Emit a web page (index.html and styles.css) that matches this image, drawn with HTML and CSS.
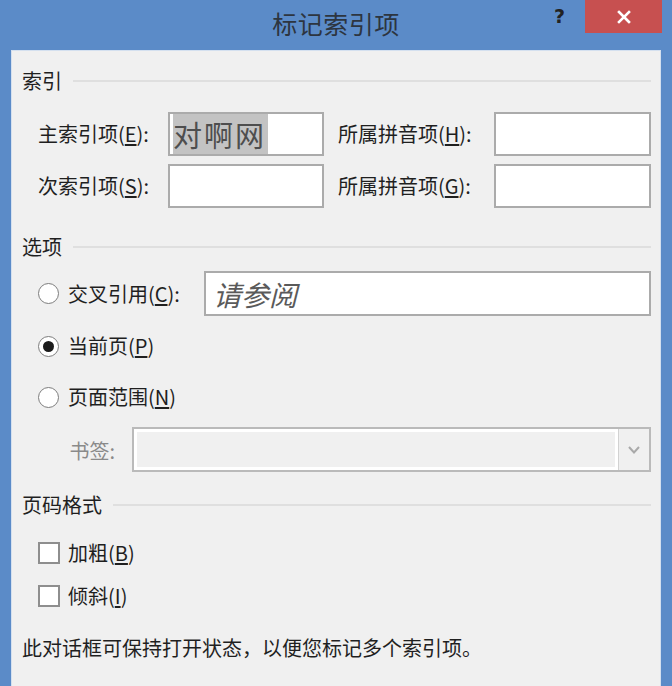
FILE: index.html
```html
<!DOCTYPE html>
<html lang="zh-CN">
<head>
<meta charset="utf-8">
<title>标记索引项</title>
<link rel="stylesheet" href="styles.css">
</head>
<body>
<div class="window">
  <div class="titlebar">
    <div class="tb-spacer"></div>
    <div class="tb-title">标记索引项</div>
    <div class="tb-controls">
      <span class="tb-help">?</span>
      <span class="tb-close">
        <svg width="14" height="14" viewBox="0 0 14 14"><path d="M2 2 L12 12 M12 2 L2 12" stroke="#fff" stroke-width="2.6" stroke-linecap="square"/></svg>
      </span>
    </div>
  </div>
  <div class="panel">
    <div class="section-head"><span>索引</span><span class="rule"></span></div>

    <div class="entry-grid">
      <label class="lbl">主索引项(<u>E</u>):</label>
      <div class="field"><span class="sel">对啊网</span></div>
      <label class="lbl lbl2">所属拼音项(<u>H</u>):</label>
      <div class="field"></div>
      <label class="lbl">次索引项(<u>S</u>):</label>
      <div class="field"></div>
      <label class="lbl lbl2">所属拼音项(<u>G</u>):</label>
      <div class="field"></div>
    </div>

    <div class="section-head head2"><span>选项</span><span class="rule"></span></div>

    <div class="opt-row xref">
      <span class="radio"></span>
      <span class="opt-label xref-label">交叉引用(<u>C</u>):</span>
      <div class="field wide"><span class="hint">请参阅</span></div>
    </div>
    <div class="opt-row current">
      <span class="radio checked"></span>
      <span class="opt-label">当前页(<u>P</u>)</span>
    </div>
    <div class="opt-row range">
      <span class="radio"></span>
      <span class="opt-label">页面范围(<u>N</u>)</span>
    </div>
    <div class="bookmark-row">
      <span class="bm-label">书签:</span>
      <div class="combo">
        <div class="combo-field"></div>
        <div class="combo-btn">
          <svg width="12" height="8" viewBox="0 0 12 8"><polyline points="1,1 6,6.5 11,1" fill="none" stroke="#a9a9a9" stroke-width="2"/></svg>
        </div>
      </div>
    </div>

    <div class="section-head head3"><span>页码格式</span><span class="rule"></span></div>

    <div class="opt-row bold">
      <span class="check"></span>
      <span class="opt-label">加粗(<u>B</u>)</span>
    </div>
    <div class="opt-row italic">
      <span class="check"></span>
      <span class="opt-label">倾斜(<u>I</u>)</span>
    </div>

    <p class="note">此对话框可保持打开状态，以便您标记多个索引项。</p>
  </div>
</div>
</body>
</html>
```

FILE: styles.css
```css
* { box-sizing: border-box; }
html, body {
  margin: 0;
  padding: 0;
}
body {
  width: 672px;
  height: 686px;
  overflow: hidden;
  background: #5b8bc8;
  font-family: "Noto Sans CJK SC", "Microsoft YaHei", sans-serif;
  color: #1f1f1f;
  font-size: 20px;
}
.window {
  width: 672px;
  height: 686px;
  display: flex;
  flex-direction: column;
}
.titlebar {
  height: 50px;
  display: grid;
  grid-template-columns: 1fr auto 1fr;
  align-items: start;
}
.tb-title {
  font-size: 25px;
  line-height: 46px;
  color: #2d3540;
  letter-spacing: 0.5px;
}
.tb-controls {
  display: flex;
  justify-content: flex-end;
  align-items: flex-start;
  padding-right: 10px;
}
.tb-help {
  font-family: "DejaVu Sans", sans-serif;
  font-weight: bold;
  font-size: 19px;
  line-height: 32px;
  color: #222;
  margin-right: 20px;
}
.tb-close {
  width: 77px;
  height: 33px;
  background: #c75050;
  display: flex;
  align-items: center;
  justify-content: center;
}
.panel {
  margin-left: 11px;
  width: 650px;
  flex: 1;
  background: #f0f0f0;
  border: 1px solid #d4e0ef;
  border-bottom: none;
  padding: 19px 9px 0 10px;
}
.section-head {
  display: flex;
  align-items: center;
  height: 22px;
  line-height: 22px;
}
.section-head .rule {
  flex: 1;
  height: 2px;
  background: #dfdfdf;
  margin-left: 11px;
}
.head2 { margin-top: 28px; }
.head3 { margin-top: 22px; }

.entry-grid {
  margin-top: 20px;
  padding-left: 16px;
  display: grid;
  grid-template-columns: 130px 156px 170px 157px;
  grid-auto-rows: 44px;
  row-gap: 8px;
  align-items: center;
}
.lbl { white-space: nowrap; line-height: 22px; }
.lbl2 { padding-left: 14px; }
.field {
  height: 44px;
  background: #fff;
  border: 2px solid #ababab;
  display: flex;
  align-items: center;
  padding-left: 3px;
  overflow: hidden;
}
.sel {
  background: #c3c3c3;
  color: #4e4e4e;
  font-size: 29px;
  line-height: 40px;
  letter-spacing: 2px;
  padding-right: 2px;
}
.opt-row {
  display: flex;
  align-items: center;
  height: 30px;
  padding-left: 16px;
}
.opt-label { line-height: 22px; white-space: nowrap; }
.xref { height: 45px; margin-top: 13px; }
.current { margin-top: 15px; }
.range { margin-top: 21px; }
.bold { margin-top: 22px; }
.italic { margin-top: 13px; }
.xref-label { width: 136px; }
.field.wide {
  flex: 1;
  height: 45px;
  padding-left: 7px;
}
.hint {
  font-style: italic;
  color: #5a5a5a;
  font-size: 28px;
  line-height: 40px;
}
.radio {
  width: 21px;
  height: 21px;
  border-radius: 50%;
  border: 1.5px solid #7d7d7d;
  background: #fff;
  margin-right: 9px;
  display: flex;
  align-items: center;
  justify-content: center;
  flex: none;
}
.radio.checked::after {
  content: "";
  width: 11px;
  height: 11px;
  border-radius: 50%;
  background: #1b1b1b;
}
.check {
  width: 22px;
  height: 22px;
  border: 2px solid #8e8e8e;
  background: #fff;
  margin-right: 8px;
  flex: none;
}
.bookmark-row {
  margin-top: 15px;
  padding-left: 16px;
  display: flex;
  align-items: center;
  height: 45px;
}
.bm-label {
  width: 77px;
  text-align: right;
  margin-right: 17px;
  color: #8a8a8a;
  line-height: 22px;
  padding-top: 3px;
}
.combo {
  flex: 1;
  height: 45px;
  border: 2px solid #bababa;
  display: flex;
}
.combo-field {
  flex: 1;
  border: 3px solid #fff;
  background: #f0f0f0;
}
.combo-btn {
  width: 31px;
  background: #f0f0f0;
  border-left: 1px solid #d2d2d2;
  display: flex;
  align-items: center;
  justify-content: center;
}
.note {
  margin: 26px 0 0 0;
  line-height: 22px;
  white-space: nowrap;
}
u { text-underline-offset: 2px; }
```
